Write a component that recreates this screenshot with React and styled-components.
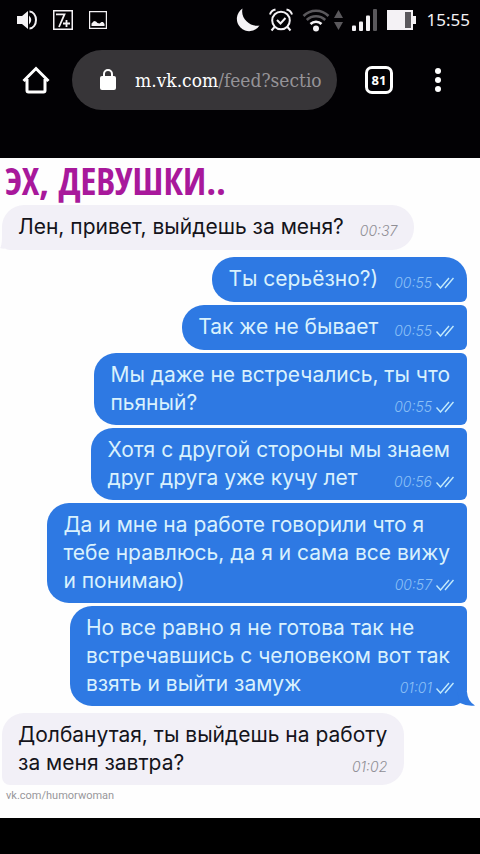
import React from 'react'
import styled, { createGlobalStyle, css } from 'styled-components'

const colors = {
	bar: '#020104',
	pill: '#373538',
	icon: '#f4f2f5',
	dim: '#5a585c',
	title: '#a8189b',
	incoming: '#f2f0f7',
	outgoing: '#2e79e3',
}

const GlobalStyle = createGlobalStyle`
	* {
		box-sizing: border-box;
	}

	body {
		background: #000;
		margin: 0;
	}

	button {
		background: none;
		border: 0;
		color: inherit;
		font: inherit;
		padding: 0;
	}

	svg {
		display: block;
		flex: none;
	}
`

const Screen = styled.div`
	background: #000;
	font-family: Inter, 'Liberation Sans', sans-serif;
	min-height: 100vh;
`

const StatusBar = styled.div`
	align-items: center;
	background: ${colors.bar};
	color: ${colors.icon};
	display: flex;
	height: 40px;
	justify-content: space-between;
	padding: 0 10px 0 17px;
`

const StatusGroup = styled.div`
	align-items: center;
	display: flex;
	gap: ${({ $gap }) => $gap}px;
`

const Clock = styled.span`
	font-family: 'Noto Sans', sans-serif;
	font-size: 17px;
	line-height: 38px;
	margin-left: 2px;
`

const Toolbar = styled.header`
	align-items: center;
	background: ${colors.bar};
	color: #fff;
	display: flex;
	height: 118px;
	padding: 0 39px 38px 22px;
`

const HomeLink = styled.a`
	color: inherit;
	margin-right: 22px;
`

const AddressButton = styled.button`
	&& {
		align-items: center;
		background: ${colors.pill};
		border-radius: 30px;
		display: flex;
		flex: 1;
		gap: 19px;
		height: 60px;
		min-width: 0;
		padding: 0 14px 0 28px;
	}
`

const Url = styled.span`
	color: #959397;
	flex: 1;
	font-family: 'DejaVu Serif Condensed', 'DejaVu Serif', serif;
	font-size: 19px;
	line-height: 28px;
	overflow: hidden;
	text-align: left;
	white-space: nowrap;

	& b {
		color: #fff;
		font-weight: 400;
	}
`

const TabsButton = styled.button`
	&& {
		border: 3px solid #fff;
		border-radius: 7px;
		font-family: 'Noto Sans', sans-serif;
		font-size: 13px;
		font-weight: 700;
		height: 28px;
		line-height: 22px;
		margin: 0 42px 0 28px;
		width: 28px;
	}
`

const Post = styled.main`
	background: #fefefe;
	display: flex;
	flex-direction: column;
	padding: 0 13px 13px 2px;
`

const Title = styled.h1`
	color: ${colors.title};
	font-family: 'Open Sans Condensed', 'Liberation Sans Narrow', 'DejaVu Sans Condensed', sans-serif;
	font-size: 37px;
	font-weight: 700;
	line-height: 45px;
	margin: 0 0 2px;
	padding-left: 3px;
	white-space: nowrap;
`

const Thread = styled.div`
	display: flex;
	flex-direction: column;
	gap: 3px;
`

const incoming = css`
	align-self: flex-start;
	background: ${colors.incoming};
	border-radius: 22px 22px 22px 8px;
	color: #15141b;
	padding-right: 17px;
`

const outgoing = css`
	align-self: flex-end;
	background: ${colors.outgoing};
	border-radius: 22px ${({ $first }) => ($first ? 22 : 6)}px ${({ $tail }) => ($tail ? 16 : 6)}px 22px;
	color: #d9f1fd;
	padding-right: 13px;
`

const Bubble = styled.div`
	font-size: 21px;
	line-height: 28px;
	min-height: 45px;
	padding: 8px 16px;
	position: relative;
	${({ $mine }) => ($mine ? outgoing : incoming)}
	margin-top: ${({ $spaced }) => ($spaced ? 4 : 0)}px;
`

const Line = styled.div`
	padding-right: ${({ $mine }) => ($mine ? 4 : 0)}px;
	white-space: nowrap;
`

const LastLine = styled.div`
	align-items: flex-end;
	display: flex;
	gap: 16px;
	justify-content: space-between;
	white-space: nowrap;
`

const Meta = styled.span`
	align-items: center;
	color: ${({ $mine }) => ($mine ? '#8cc0f6' : '#8f8e95')};
	display: flex;
	font-size: 14px;
	font-style: italic;
	font-weight: 300;
	gap: 4px;
	line-height: 20px;
`

const Tail = styled.svg`
	bottom: 0;
	position: absolute;
	${({ $mine }) => ($mine ? 'right: -8px;' : 'left: -2px;')}
`

const Source = styled.a`
	color: #98979b;
	font-family: Roboto, sans-serif;
	font-size: 11px;
	line-height: 18px;
	margin-top: 2px;
	padding-left: 4px;
	text-decoration: none;
`

const messages = [
	{ lines: ['Лен, привет, выйдешь за меня?'], time: '00:37', tail: true },
	{ lines: ['Ты серьёзно?)'], time: '00:55', mine: true, first: true, spaced: true },
	{ lines: ['Так же не бывает'], time: '00:55', mine: true },
	{ lines: ['Мы даже не встречались, ты что', 'пьяный?'], time: '00:55', mine: true },
	{ lines: ['Хотя с другой стороны мы знаем', 'друг друга уже кучу лет'], time: '00:56', mine: true },
	{ lines: ['Да и мне на работе говорили что я', 'тебе нравлюсь, да я и сама все вижу', 'и понимаю)'], time: '00:57', mine: true },
	{ lines: ['Но все равно я не готова так не', 'встречавшись с человеком вот так', 'взять и выйти замуж'], time: '01:01', mine: true, tail: true },
	{ lines: ['Долбанутая, ты выйдешь на работу', 'за меня завтра?'], time: '01:02', spaced: true },
]

const SoundIcon = () => (
	<svg width="20" height="20" viewBox="0 0 20 20" fill="currentColor">
		<path d="M0 6h5l6-5v18l-6-5H0z" />
		<path d="M12 5.500q4.500 4.500 0 9z" />
		<path d="M12.500 1.500a6.500 8.500 0 0 1 0 17" fill="none" stroke="currentColor" strokeWidth="2" />
	</svg>
)

const SevenIcon = () => (
	<svg width="20" height="20" viewBox="0 0 20 20" fill="none" stroke="currentColor">
		<path d="M.75.75h18.500v18.500H.75z" strokeWidth="1.500" />
		<path d="M3 4.300h8.500L6 17M13.500 10v7M10 13.500h7" strokeWidth="1.800" />
	</svg>
)

const ImageIcon = () => (
	<svg width="18" height="18" viewBox="0 0 18 18" fill="currentColor">
		<path d="M.6.6h16.800v16.800H.6z" fill="none" stroke="currentColor" strokeWidth="1.200" />
		<path d="M2.500 15v-2.500L5 10l2 .5L8.500 12l2 .5 2-1.500h1.500l1.500 2V15z" />
	</svg>
)

const MoonIcon = () => (
	<svg width="26" height="25" viewBox="0 0 26 25" fill="currentColor">
		<path d="M8.500.5A12.300 12.300 0 1 0 25.500 17.500C17.500 19.500 6 11 8.500.5z" />
	</svg>
)

const AlarmIcon = () => (
	<svg width="24" height="24" viewBox="0 0 24 24" fill="none" stroke="currentColor" strokeWidth="2">
		<circle cx="12" cy="12.500" r="8.800" />
		<path d="M1 6.500Q2 2.500 6.500 1.500M23 6.500Q22 2.500 17.500 1.500M5.500 19l-3 3.500M18.500 19l3 3.500M8 12l3.500 3.500 5-5.500" />
	</svg>
)

const WifiIcon = () => (
	<svg width="28" height="24" viewBox="0 0 28 24" fill="none" stroke={colors.dim} strokeWidth="2.600">
		<path d="M1.500 8a17.500 17.500 0 0 1 25 0M4.800 12a13 13 0 0 1 18.400 0" />
		<path d="M8.500 16a8 8 0 0 1 11 0" stroke={colors.icon} />
		<circle cx="14" cy="20.500" r="3" fill={colors.icon} stroke="none" />
	</svg>
)

const TrafficIcon = () => (
	<svg width="9" height="20" viewBox="0 0 9 20" fill={colors.dim}>
		<path d="M4.500 0L9 8H0zM4.500 20L9 12H0z" />
	</svg>
)

const SignalIcon = () => (
	<svg width="26" height="22" viewBox="0 0 26 22" fill="currentColor">
		<rect y="16.500" width="4" height="5.500" rx="1" />
		<rect x="7" y="12.500" width="4" height="9.500" rx="1" />
		<rect x="14" y="6.500" width="4" height="15.500" rx="1" />
		<rect x="21" y="0" width="4" height="22" rx="1" fill={colors.dim} />
	</svg>
)

const BatteryIcon = () => (
	<svg width="29" height="20" viewBox="0 0 29 20" fill="currentColor">
		<path d="M0 0h26v6h3v8h-3v6H0z" />
		<path d="M18 2h6v16h-6z" fill={colors.dim} />
	</svg>
)

const HomeIcon = () => (
	<svg width="28" height="28" viewBox="0 0 28 28" fill="none" stroke="currentColor" strokeWidth="3">
		<path d="M1.500 15L14 2.500 26.500 15M5 13v11.500q0 1.500 1.500 1.500h15q1.500 0 1.500-1.500V13" />
	</svg>
)

const LockIcon = () => (
	<svg width="16" height="22" viewBox="0 0 16 22">
		<rect y="7" width="16" height="14" rx="2" fill="#fff" />
		<path d="M4 8V5a4 4 0 0 1 8 0v3" fill="none" stroke="#fff" strokeWidth="2" />
	</svg>
)

const MenuIcon = () => (
	<svg width="6" height="26" viewBox="0 0 6 26" fill="currentColor">
		<circle cx="3" cy="4" r="3" />
		<circle cx="3" cy="13" r="3" />
		<circle cx="3" cy="22" r="3" />
	</svg>
)

const ChecksIcon = () => (
	<svg width="18" height="12" viewBox="0 0 18 12" fill="none" stroke="#c3eafb" strokeWidth="1.400">
		<path d="M.5 6.500L4.500 11 13 1M9 11l8.500-10" />
	</svg>
)

const BubbleTail = ({ mine }) => (
	<Tail $mine={mine} width="18" height="14" viewBox="0 0 18 14" aria-hidden="true">
		{mine
			? <path d="M0 0H10Q10.500 9 18 13.500Q10 14.500 3 11Z" fill={colors.outgoing} />
			: <path d="M2 0Q2 10 0 12Q5 14 9 11Z" fill={colors.incoming} />}
	</Tail>
)

const Message = ({ lines, time, mine, first, spaced, tail }) => {
	const last = lines[lines.length - 1]

	return (
		<Bubble $mine={mine} $first={first} $spaced={spaced} $tail={tail}>
			{tail && <BubbleTail mine={mine} />}
			{lines.slice(0, -1).map(line => <Line key={line} $mine={mine}>{line}</Line>)}
			<LastLine>
				<span>{last}</span>
				<Meta $mine={mine}>
					<time>{time}</time>
					{mine && <ChecksIcon />}
				</Meta>
			</LastLine>
		</Bubble>
	)
}

const App = () => {
	return (
		<Screen>
			<GlobalStyle />
			<StatusBar>
				<StatusGroup $gap={16}>
					<SoundIcon />
					<SevenIcon />
					<ImageIcon />
				</StatusGroup>
				<StatusGroup $gap={9}>
					<MoonIcon />
					<AlarmIcon />
					<StatusGroup $gap={4}>
						<WifiIcon />
						<TrafficIcon />
					</StatusGroup>
					<SignalIcon />
					<BatteryIcon />
					<Clock>15:55</Clock>
				</StatusGroup>
			</StatusBar>
			<Toolbar>
				<HomeLink href="#" aria-label="Home"><HomeIcon /></HomeLink>
				<AddressButton type="button">
					<LockIcon />
					<Url><b>m.vk.com</b>/feed?sectio</Url>
				</AddressButton>
				<TabsButton type="button">81</TabsButton>
				<button type="button" aria-label="Menu"><MenuIcon /></button>
			</Toolbar>
			<Post>
				<Title>ЭХ, ДЕВУШКИ..</Title>
				<Thread>
					{messages.map(message => <Message key={message.lines[0]} {...message} />)}
				</Thread>
				<Source href="#">vk.com/humorwoman</Source>
			</Post>
		</Screen>
	)
}

export default App
